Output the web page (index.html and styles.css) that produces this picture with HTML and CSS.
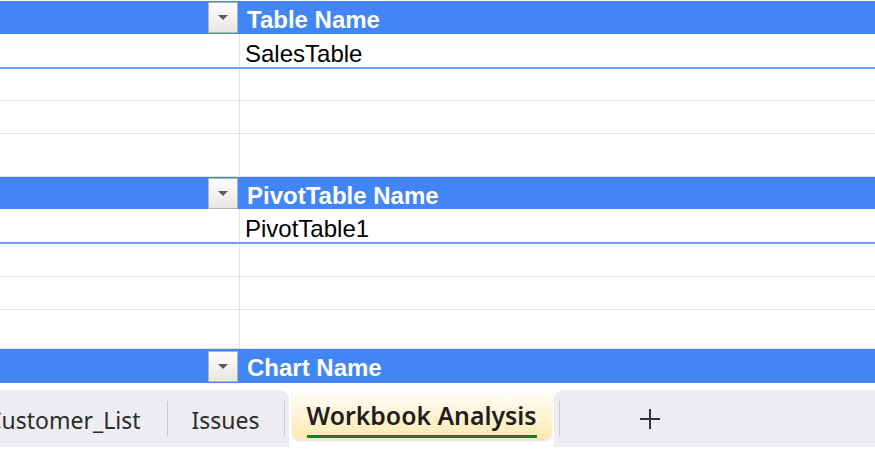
FILE: index.html
```html
<!DOCTYPE html>
<html lang="en">
<head>
  <meta charset="UTF-8">
  <meta name="viewport" content="width=device-width, initial-scale=1.0">
  <title>Workbook Analysis</title>
  <link rel="stylesheet" href="styles.css">
</head>
<body>
  <div class="sheet">
    <div class="row header h1">
      <div class="cell key"><span class="filter"></span></div>
      <div class="cell val">Table Name</div>
    </div>
    <div class="row data">
      <div class="cell key"></div>
      <div class="cell val">SalesTable</div>
    </div>
    <div class="row blank b1"><div class="cell key"></div><div class="cell val"></div></div>
    <div class="row blank"><div class="cell key"></div><div class="cell val"></div></div>
    <div class="row blank tall"><div class="cell key"></div><div class="cell val"></div></div>

    <div class="row header h2">
      <div class="cell key"><span class="filter"></span></div>
      <div class="cell val">PivotTable Name</div>
    </div>
    <div class="row data">
      <div class="cell key"></div>
      <div class="cell val">PivotTable1</div>
    </div>
    <div class="row blank"><div class="cell key"></div><div class="cell val"></div></div>
    <div class="row blank"><div class="cell key"></div><div class="cell val"></div></div>
    <div class="row blank mid"><div class="cell key"></div><div class="cell val"></div></div>

    <div class="row header h3">
      <div class="cell key"><span class="filter"></span></div>
      <div class="cell val">Chart Name</div>
    </div>
  </div>

  <div class="tabbar">
    <div class="strip left">
      <div class="tab first">Customer_List</div>
      <span class="sep"></span>
      <div class="tab">Issues</div>
      <span class="sep"></span>
    </div>
    <div class="tab active"><span class="label">Workbook Analysis</span></div>
    <div class="strip right">
      <span class="sep"></span>
      <div class="add">
        <svg width="22" height="22" viewBox="0 0 22 22">
          <path d="M11 1v20M1 11h20" stroke="#333" stroke-width="2" fill="none"/>
        </svg>
      </div>
    </div>
  </div>
</body>
</html>
```

FILE: styles.css
```css
html, body {
  margin: 0;
  padding: 0;
  height: 450px;
  overflow: hidden;
  background: #fff;
}
.sheet {
  height: 383px;
  padding-top: 1px;
  box-sizing: border-box;
  overflow: hidden;
  font-family: "Liberation Sans", Arial, sans-serif;
  font-size: 24px;
  color: #000;
}
.row {
  display: flex;
  box-sizing: border-box;
}
.cell {
  box-sizing: border-box;
}
.key {
  width: 240px;
  flex-shrink: 0;
  border-right: 1px solid #e2e2e2;
}
.val {
  flex: 1;
  padding-left: 5px;
}
.header {
  background: #4285f4;
  color: #fff;
  font-weight: bold;
}
.header .key {
  border-right: none;
  display: flex;
  justify-content: flex-end;
  align-items: center;
  padding-right: 2px;
}
.header .val {
  padding-left: 7px;
}
.h1 { height: 33px; line-height: 33px; }
.h1 .val { padding-top: 2px; }
.h2 { height: 32px; line-height: 32px; }
.h2 .val { padding-top: 3px; }
.h3 { height: 35px; line-height: 35px; }
.h3 .val { padding-top: 1px; }
.filter {
  width: 30px;
  height: 31px;
  box-sizing: border-box;
  border: 1px solid #b4b4b4;
  background: linear-gradient(#fdfdfd, #e6e6e6);
  display: flex;
  align-items: center;
  justify-content: center;
}
.filter::after {
  content: "";
  border-left: 5px solid transparent;
  border-right: 5px solid transparent;
  border-top: 5px solid #5a5a5a;
}
.data {
  height: 35px;
  border-bottom: 2px solid #6d9ef2;
  line-height: 33px;
}
.data .val {
  padding-top: 3px;
}
.blank {
  height: 33px;
  border-bottom: 1px solid #e2e2e2;
}
.blank.b1 { height: 32px; }
.blank.tall { height: 43px; }
.blank.mid { height: 39px; }

.tabbar {
  height: 67px;
  padding-top: 7px;
  padding-bottom: 3px;
  box-sizing: border-box;
  display: flex;
  font-family: "Noto Sans", "Open Sans", sans-serif;
  font-size: 23px;
  color: #2b2b2b;
}
.strip {
  background: #ececf1;
  display: flex;
  align-items: center;
}
.strip.left {
  margin-left: -13px;
  padding-right: 4px;
  border-top-right-radius: 9px;
  flex-shrink: 0;
}
.strip.right {
  flex: 1;
  margin-left: 2px;
  border-top-left-radius: 9px;
}
.tab {
  white-space: nowrap;
  padding-top: 3px;
}
.tab.first {
  padding-right: 27px;
}
.strip .sep + .tab {
  padding-left: 23px;
  padding-right: 24px;
}
.sep {
  width: 1px;
  height: 35px;
  background: #c9c9cd;
  flex-shrink: 0;
}
.strip.right .sep {
  margin-left: 5px;
}
.tab.active {
  width: 260px;
  margin-left: 3px;
  padding-top: 0;
  flex-shrink: 0;
  box-sizing: border-box;
  background: linear-gradient(#fffefa, #fde8ae);
  border-radius: 0 0 8px 8px;
  box-shadow: 0 1px 2px rgba(0, 0, 0, 0.12);
  margin-bottom: 7px;
  display: flex;
  justify-content: center;
  align-items: flex-start;
  font-size: 24.8px;
  font-weight: 600;
  color: #1f1f1f;
}
.tab.active .label {
  margin-top: 9px;
  padding-bottom: 4px;
  border-bottom: 3px solid #137a3c;
  line-height: 32px;
}
.add {
  margin-left: 79px;
  display: flex;
  align-items: center;
}
```
